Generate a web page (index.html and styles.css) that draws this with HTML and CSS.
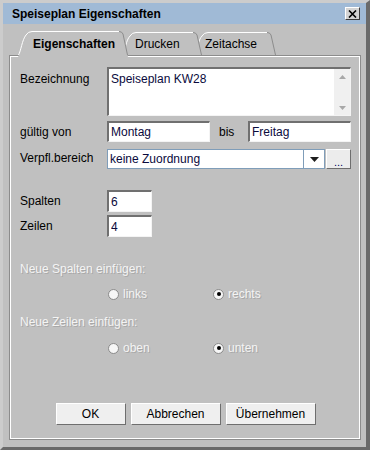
FILE: index.html
```html
<!DOCTYPE html>
<html lang="de">
<head>
    <meta charset="UTF-8">
    <title>Speiseplan Eigenschaften</title>
    <link rel="stylesheet" href="styles.css">
</head>
<body>
    <div class="window">
        <div class="titlebar">
            <span class="title">Speiseplan Eigenschaften</span>
            <span class="close">
                <svg width="9" height="8" viewBox="0 0 9 8"><path d="M1 0.5 L8 7.5 M8 0.5 L1 7.5" stroke="#000" stroke-width="1.6"/></svg>
            </span>
        </div>

        <div class="tabs">
            <div class="tab tab-1">
                <svg class="tab-shape" width="110" height="26" viewBox="0 0 110 26">
                    <path d="M0 26 C3 21 4 9 8 4 Q10 0.5 14 0.5 L101 0.5 Q104 0.5 105 3 L110 26 Z" fill="#c0c0c0"/>
                    <path d="M0.5 24 C3 20 4 9 8 4 Q10 0.5 14 0.5 L101 0.5" fill="none" stroke="#fff"/>
                    <path d="M101 0.5 Q104 0.5 105 3 L109.5 24" fill="none" stroke="#8c8c8c"/>
                </svg>
                <span class="tab-label">Eigenschaften</span>
            </div>
            <div class="tab tab-2">
                <svg class="tab-shape" width="80" height="23" viewBox="0 0 80 23">
                    <path d="M0 23 C3 19 4 8 8 4 Q10 0.5 14 0.5 L71 0.5 Q74 0.5 75 3 L80 23 Z" fill="#c0c0c0"/>
                    <path d="M0.5 23 C3 19 4 8 8 4 Q10 0.5 14 0.5 L71 0.5" fill="none" stroke="#fff"/>
                    <path d="M71 0.5 Q74 0.5 75 3 L79.5 23" fill="none" stroke="#8c8c8c"/>
                </svg>
                <span class="tab-label">Drucken</span>
            </div>
            <div class="tab tab-3">
                <svg class="tab-shape" width="82" height="23" viewBox="0 0 82 23">
                    <path d="M0 23 C3 19 4 8 8 4 Q10 0.5 14 0.5 L73 0.5 Q76 0.5 77 3 L82 23 Z" fill="#c0c0c0"/>
                    <path d="M0.5 23 C3 19 4 8 8 4 Q10 0.5 14 0.5 L73 0.5" fill="none" stroke="#fff"/>
                    <path d="M73 0.5 Q76 0.5 77 3 L81.5 23" fill="none" stroke="#8c8c8c"/>
                </svg>
                <span class="tab-label">Zeitachse</span>
            </div>
        </div>

        <div class="panel">
            <div class="form">
                <label class="lbl lbl-top">Bezeichnung</label>
                <div class="textarea">
                    <div class="textarea-text">Speiseplan KW28</div>
                    <div class="vscroll">
                        <svg width="7" height="4" viewBox="0 0 7 4"><path d="M0 4 L3.5 0 L7 4 Z" fill="#a8a8a8"/></svg>
                        <svg width="7" height="4" viewBox="0 0 7 4"><path d="M0 0 L7 0 L3.5 4 Z" fill="#a8a8a8"/></svg>
                    </div>
                </div>

                <label class="lbl">gültig von</label>
                <div class="range">
                    <input class="field wide" type="text" size="1" value="Montag">
                    <span class="bis">bis</span>
                    <input class="field grow" type="text" size="1" value="Freitag">
                </div>

                <label class="lbl">Verpfl.bereich</label>
                <div class="combo-row">
                    <div class="combo">
                        <span class="combo-text">keine Zuordnung</span>
                        <span class="combo-arrow">
                            <svg width="9" height="5" viewBox="0 0 9 5"><path d="M0 0 L9 0 L4.5 5 Z" fill="#1e1e1e"/></svg>
                        </span>
                    </div>
                    <button class="small-btn">...</button>
                </div>
            </div>

            <div class="form counts">
                <label class="lbl">Spalten</label>
                <input class="field short" type="text" size="1" value="6">
                <label class="lbl">Zeilen</label>
                <input class="field short" type="text" size="1" value="4">
            </div>

            <div class="group-title disabled">Neue Spalten einfügen:</div>
            <div class="radio-row">
                <span class="radio-item disabled"><span class="radio"></span>links</span>
                <span class="radio-item disabled"><span class="radio"><span class="dot"></span></span>rechts</span>
            </div>

            <div class="group-title second disabled">Neue Zeilen einfügen:</div>
            <div class="radio-row second">
                <span class="radio-item disabled"><span class="radio"></span>oben</span>
                <span class="radio-item disabled"><span class="radio"><span class="dot"></span></span>unten</span>
            </div>

            <div class="buttons">
                <button class="btn btn-ok">OK</button>
                <button class="btn btn-cancel">Abbrechen</button>
                <button class="btn btn-apply">Übernehmen</button>
            </div>
        </div>
    </div>
</body>
</html>
```

FILE: styles.css
```css
body {
    margin: 0;
    background-color: #c0c0c0;
    font-family: "Liberation Sans", Arial, sans-serif;
    font-size: 12px;
    color: #000;
}

.window {
    width: 370px;
    height: 450px;
    box-sizing: border-box;
    border-style: solid;
    border-width: 3px 4px 3px 3px;
    border-color: #cccccc #6a6a6a #6a6a6a #cccccc;
    display: flex;
    flex-direction: column;
}

.titlebar {
    height: 21px;
    flex: none;
    display: flex;
    align-items: center;
    justify-content: space-between;
    padding: 0 6px 0 9px;
    background-color: #a0bad6;
    font-weight: bold;
}

.close {
    width: 15px;
    height: 13px;
    box-sizing: border-box;
    border: 1px solid;
    border-color: #fff #3c3c3c #3c3c3c #fff;
    background-color: #d4d4d4;
    display: flex;
    align-items: center;
    justify-content: center;
}

/* tabs */
.tabs {
    height: 33px;
    flex: none;
    display: flex;
    align-items: flex-end;
    padding-left: 15px;
    margin-bottom: -2px;
    position: relative;
    z-index: 1;
}

.tab {
    position: relative;
    height: 23px;
    margin-bottom: 2px;
    box-sizing: border-box;
    display: flex;
    align-items: center;
}

.tab-shape {
    position: absolute;
    left: 0;
    top: 0;
}

.tab-label {
    position: relative;
}

.tab-1 {
    width: 110px;
    height: 26px;
    margin-bottom: 0;
    padding-left: 15px;
    padding-bottom: 1px;
    font-weight: bold;
    z-index: 3;
}

.tab-2 {
    width: 80px;
    margin-left: -6px;
    padding-left: 13px;
    z-index: 2;
}

.tab-3 {
    width: 82px;
    margin-left: -8px;
    padding-left: 11px;
    z-index: 1;
}

/* panel */
.panel {
    flex: 1;
    min-width: 0;
    margin: 0 5px 7px 6px;
    padding: 11px 9px 14px 10px;
    border: 1px solid #8c8c8c;
    box-shadow: inset 1px 1px 0 #fff, inset -1px -1px 0 #fff;
    display: flex;
    flex-direction: column;
}

.form {
    display: grid;
    grid-template-columns: 87px minmax(0, 1fr);
    row-gap: 5px;
}

.lbl {
    align-self: center;
}

.lbl-top {
    align-self: start;
    padding-top: 5px;
}

.textarea {
    height: 49px;
    box-sizing: border-box;
    display: flex;
    background-color: #fff;
    border-style: solid;
    border-width: 2px 1px 1px 2px;
    border-color: #707070 #f4f4f4 #f4f4f4 #707070;
}

.textarea-text {
    flex: 1;
    padding: 3px 2px;
    color: #0a0a3c;
}

.vscroll {
    width: 16px;
    background-color: #f0f0f0;
    display: flex;
    flex-direction: column;
    justify-content: space-between;
    align-items: center;
    padding: 6px 0 5px;
}

.field {
    height: 21px;
    box-sizing: border-box;
    margin: 0;
    padding: 0 2px;
    font: inherit;
    color: #0a0a3c;
    background-color: #fff;
    border-style: solid;
    border-width: 2px 1px 1px 2px;
    border-color: #707070 #f4f4f4 #f4f4f4 #707070;
    outline: none;
}

.range {
    display: flex;
    align-items: center;
    min-width: 0;
}

.wide {
    width: 103px;
}

.bis {
    width: 38px;
    flex: none;
    box-sizing: border-box;
    padding-left: 9px;
}

.grow {
    flex: 1;
    min-width: 0;
    width: 0;
}

.combo-row {
    display: flex;
    gap: 1px;
    height: 20px;
    margin-top: 2px;
    min-width: 0;
}

.combo {
    flex: 1;
    min-width: 0;
    display: flex;
    border: 1px solid #7f9db9;
    background-color: #fff;
}

.combo-text {
    flex: 1;
    padding-left: 2px;
    line-height: 18px;
    color: #0a0a3c;
}

.combo-arrow {
    width: 20px;
    border-left: 1px solid #7f9db9;
    display: flex;
    align-items: center;
    justify-content: center;
}

.small-btn {
    width: 25px;
    height: 20px;
    flex: none;
    padding: 5px 0 0;
    background-color: #ececec;
    border: 1px solid;
    border-color: #fff #6e6e6e #6e6e6e #fff;
    font: inherit;
    font-size: 11px;
    color: #000066;
}

.counts {
    margin-top: 21px;
    row-gap: 3px;
}

.short {
    width: 45px;
    height: 22px;
}

/* disabled insert options */
.disabled {
    color: #f4f4f4;
    text-shadow: 1px 1px 0 #a8a8a8;
}

.group-title {
    margin-top: 25px;
    line-height: 14px;
}

.group-title.second {
    margin-top: 14px;
}

.radio-row {
    display: flex;
    padding-left: 88px;
    margin-top: 11px;
    line-height: 14px;
}

.radio-row.second {
    margin-top: 12px;
}

.radio-item {
    width: 105px;
    display: flex;
    align-items: center;
}

.radio {
    width: 11px;
    height: 11px;
    box-sizing: border-box;
    margin-right: 4px;
    border-radius: 50%;
    border: 1px solid #8a8a8a;
    background-color: #f6f6f6;
    display: flex;
    align-items: center;
    justify-content: center;
}

.dot {
    width: 4px;
    height: 4px;
    border-radius: 50%;
    background-color: #000;
}

.buttons {
    margin-top: auto;
    display: flex;
    justify-content: center;
    gap: 5px;
}

.btn {
    height: 22px;
    padding: 0;
    background-color: #efefef;
    border: 1px solid;
    border-color: #fff #6e6e6e #6e6e6e #fff;
    font: inherit;
    color: #000;
}

.btn-ok {
    width: 70px;
}

.btn-cancel {
    width: 90px;
}

.btn-apply {
    width: 90px;
}
```
